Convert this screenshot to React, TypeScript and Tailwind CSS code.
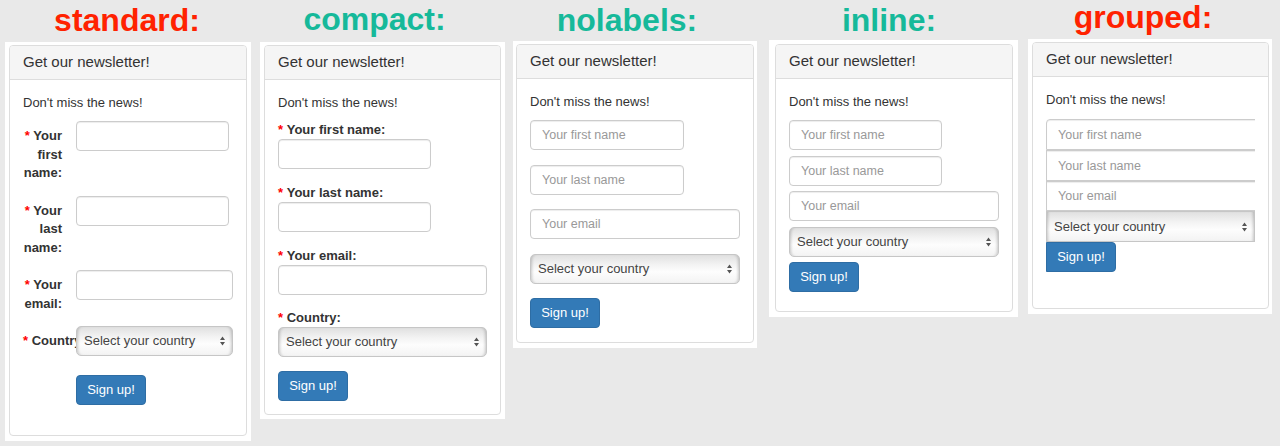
import React from "react";

const Req = () => <span className="text-[#ff0000]">*</span>;

function Header() {
  return (
    <div className="h-[34px] flex items-center px-[13px] bg-[#f5f5f5] border-b border-[#dddddd] rounded-t-[3px] text-[15px] text-[#333333]">
      Get our newsletter!
    </div>
  );
}

function Field({ ph, className = "" }: { ph?: string; className?: string }) {
  return (
    <input
      readOnly
      placeholder={ph}
      className={
        "block h-[30px] border border-[#cccccc] px-[11px] text-[12.5px] text-[#555555] placeholder:text-[#999999] bg-white shadow-[inset_0_1px_1px_rgba(0,0,0,0.075)] outline-none " +
        className
      }
    />
  );
}

function Sel({ className = "" }: { className?: string }) {
  return (
    <div
      className={
        "relative flex items-center justify-between h-[30px] border border-[#c6c6c6] pl-[7px] pr-[7px] text-[13px] text-[#444444] bg-[linear-gradient(to_bottom,#e0e0e0_0%,#f3f3f3_35%,#fdfdfd_60%,#f3f3f3_100%)] shadow-[inset_3px_0_3px_-2px_rgba(0,0,0,0.2),inset_-3px_0_3px_-2px_rgba(0,0,0,0.2)] " +
        className
      }
    >
      <span className="whitespace-nowrap">Select your country</span>
      <svg width="5" height="10" viewBox="0 0 5 10" className="shrink-0">
        <path d="M0 4 L2.5 0.5 L5 4 Z M0 6 L2.5 9.5 L5 6 Z" fill="#555555" />
      </svg>
    </div>
  );
}

function Btn({ className = "rounded-[4px]" }: { className?: string }) {
  return (
    <button
      className={
        "w-[70px] h-[30px] bg-[#337ab7] border border-[#2e6da4] text-white text-[13px] " +
        className
      }
    >
      Sign up!
    </button>
  );
}

function Title({ text, className }: { text: string; className: string }) {
  return (
    <div
      className={
        "h-[32px] leading-[32px] text-center text-[32px] font-bold whitespace-nowrap " +
        className
      }
    >
      {text}
    </div>
  );
}

function StdRow({
  label,
  children,
  className = "mb-[13px]",
  nowrap = false,
}: {
  label: string;
  children: React.ReactNode;
  className?: string;
  nowrap?: boolean;
}) {
  return (
    <div className={"flex items-start " + className}>
      <label
        className={
          "w-[39px] shrink-0 pt-[6px] text-right font-bold leading-[18.5px] " +
          (nowrap ? "whitespace-nowrap" : "")
        }
      >
        <Req />
        {"\u00a0" + label}
      </label>
      <div className="ml-[14px] flex-1 min-w-0 relative">{children}</div>
    </div>
  );
}

function CompactGroup({
  label,
  children,
  className = "mb-[15px]",
}: {
  label: string;
  children: React.ReactNode;
  className?: string;
}) {
  return (
    <div className={className}>
      <div className="font-bold leading-[18px]">
        <Req />
        {"\u00a0" + label}
      </div>
      {children}
    </div>
  );
}

export default function App() {
  return (
    <div className="w-[1280px] h-[446px] overflow-hidden bg-[#e9e9e9] flex items-start font-['Liberation_Sans',Arial,Helvetica,sans-serif] text-[#333333]">
      {/* standard */}
      <div className="ml-[5px] w-[246px] flex flex-col">
        <Title text="standard:" className="mt-[4px] pr-[2px] text-[#ff2200]" />
        <div className="mt-[6px] bg-white pt-[3px] pb-[5px] px-[4px]">
          <div className="border border-[#dddddd] rounded-[4px] bg-white">
            <Header />
            <div className="px-[13px] pt-[14px] pb-[30px] text-[13px]">
              <p className="leading-[18px] mb-[9px]">Don't miss the news!</p>
              <StdRow label="Your first name:">
                <Field className="w-[153px] rounded-[4px]" />
              </StdRow>
              <StdRow label="Your last name:">
                <Field className="w-[153px] rounded-[4px]" />
              </StdRow>
              <StdRow label="Your email:">
                <Field className="w-full rounded-[4px]" />
              </StdRow>
              <StdRow label="Country:" nowrap className="mb-[19px]">
                <Sel className="rounded-[5px]" />
              </StdRow>
              <div className="ml-[53px]">
                <Btn />
              </div>
            </div>
          </div>
        </div>
      </div>

      {/* compact */}
      <div className="ml-[9px] w-[245px] flex flex-col">
        <Title text="compact:" className="mt-[3px] pr-[16px] text-[#16b99a]" />
        <div className="mt-[7px] bg-white pt-[3px] pb-[4px] px-[4px]">
          <div className="border border-[#dddddd] rounded-[4px] bg-white">
            <Header />
            <div className="px-[13px] pt-[14px] pb-[13px] text-[13px]">
              <p className="leading-[18px] mb-[9px]">Don't miss the news!</p>
              <CompactGroup label="Your first name:">
                <Field className="w-[153px] rounded-[4px]" />
              </CompactGroup>
              <CompactGroup label="Your last name:">
                <Field className="w-[153px] rounded-[4px]" />
              </CompactGroup>
              <CompactGroup label="Your email:" className="mb-[14px]">
                <Field className="w-full rounded-[4px]" />
              </CompactGroup>
              <CompactGroup label="Country:" className="mb-[14px]">
                <Sel className="rounded-[5px]" />
              </CompactGroup>
              <Btn />
            </div>
          </div>
        </div>
      </div>

      {/* nolabels */}
      <div className="ml-[8px] w-[244px] flex flex-col">
        <Title text="nolabels:" className="mt-[4px] pr-[16px] text-[#16b99a]" />
        <div className="mt-[5px] bg-white pt-[3px] pb-[5px] px-[3px]">
          <div className="border border-[#dddddd] rounded-[4px] bg-white">
            <Header />
            <div className="px-[13px] pt-[14px] pb-[14px] text-[13px]">
              <p className="leading-[18px] mb-[9px]">Don't miss the news!</p>
              <div className="flex flex-col items-start gap-[14.5px]">
                <Field ph="Your first name" className="w-[154px] rounded-[4px]" />
                <Field ph="Your last name" className="w-[154px] rounded-[4px]" />
                <Field ph="Your email" className="w-full rounded-[4px]" />
                <Sel className="w-full rounded-[5px]" />
                <Btn />
              </div>
            </div>
          </div>
        </div>
      </div>

      {/* inline */}
      <div className="ml-[12px] w-[249px] flex flex-col">
        <Title text="inline:" className="mt-[4px] pr-[9px] text-[#16b99a]" />
        <div className="mt-[4px] bg-white pt-[4px] pb-[5px] pl-[6px] pr-[5px]">
          <div className="border border-[#dddddd] rounded-[4px] bg-white">
            <Header />
            <div className="px-[13px] pt-[14px] pb-[19px] text-[13px]">
              <p className="leading-[18px] mb-[9px]">Don't miss the news!</p>
              <div className="flex flex-col items-start gap-[5.5px]">
                <Field ph="Your first name" className="w-[153px] rounded-[4px]" />
                <Field ph="Your last name" className="w-[153px] rounded-[4px]" />
                <Field ph="Your email" className="w-full rounded-[4px]" />
                <Sel className="w-full rounded-[5px]" />
                <Btn />
              </div>
            </div>
          </div>
        </div>
      </div>

      {/* grouped */}
      <div className="ml-[10px] w-[244px] flex flex-col">
        <Title text="grouped:" className="mt-[1px] pr-[14px] text-[#ff2200]" />
        <div className="mt-[6px] bg-white pt-[3px] pb-[5px] pl-[4px] pr-[3px]">
          <div className="border border-[#dddddd] rounded-[4px] bg-white">
            <Header />
            <div className="px-[13px] pt-[14px] pb-[36px] text-[13px]">
              <p className="leading-[18px] mb-[10px]">Don't miss the news!</p>
              <div className="flex flex-col items-start overflow-hidden">
                <Field ph="Your first name" className="w-[calc(100%+20px)] !h-[31px] rounded-tl-[4px]" />
                <Field ph="Your last name" className="w-[calc(100%+20px)] !h-[31px]" />
                <Field ph="Your email" className="w-[calc(100%+20px)]" />
                <Sel className="w-full !h-[31px]" />
                <Btn className="rounded-r-[4px]" />
              </div>
            </div>
          </div>
        </div>
      </div>
    </div>
  );
}
